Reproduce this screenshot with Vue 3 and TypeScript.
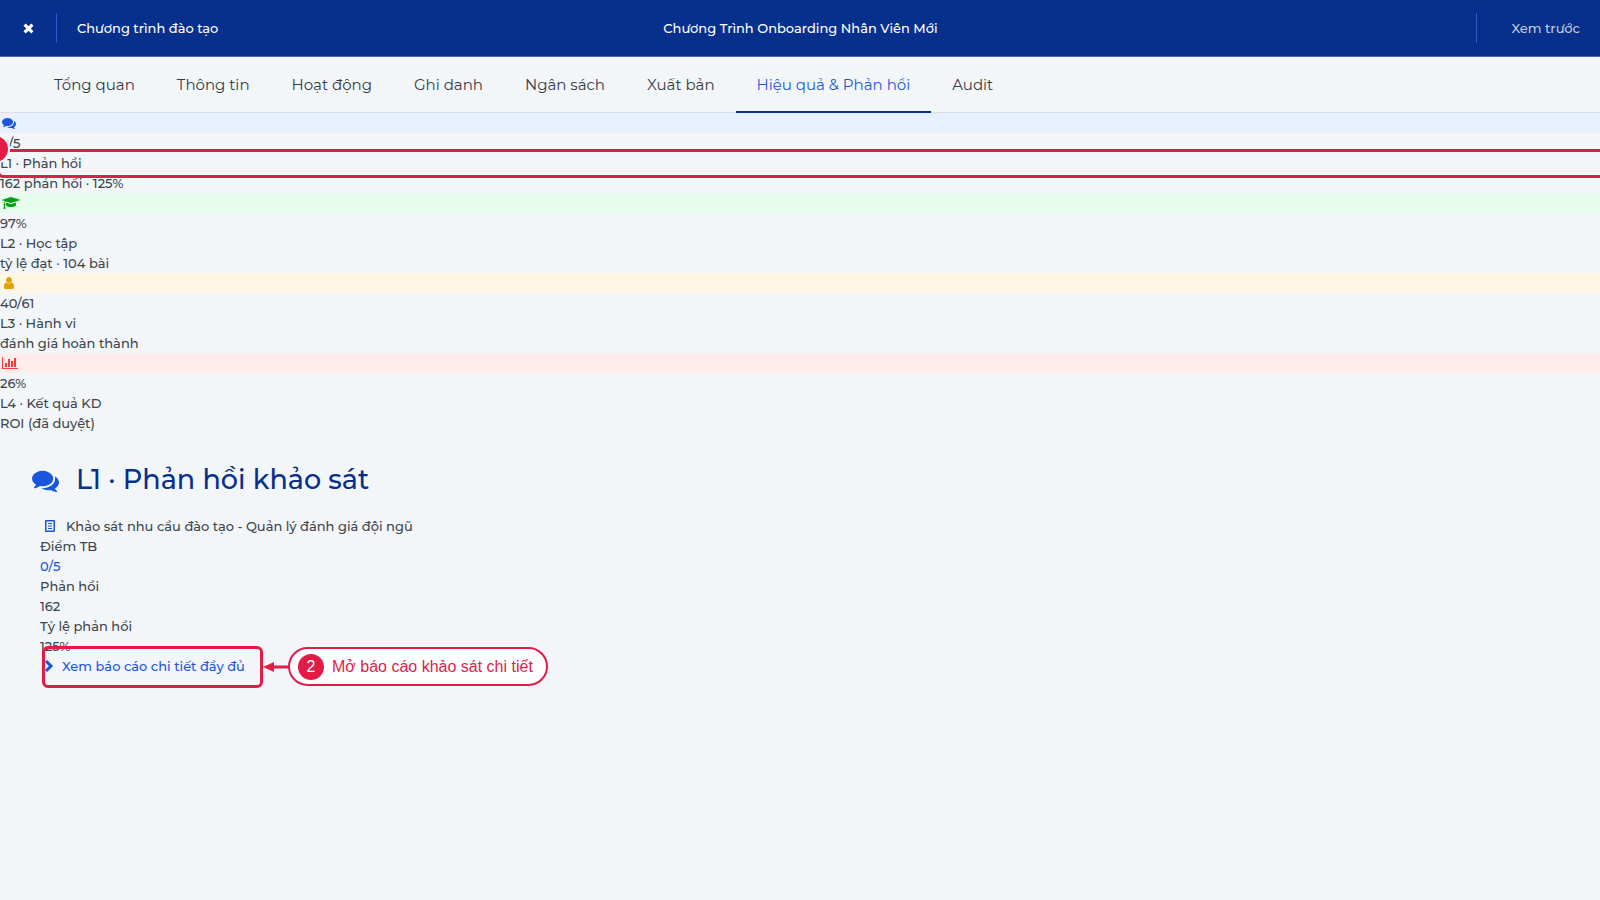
<script setup lang="ts">
interface Tab { label: string; active?: boolean }
interface Kpi { tone: string; icon: string; box: string; width: number; path: string; value: string; label: string; note: string }

const comments = 'M1408 768q0 139-94 257t-256.500 186.500t-353.500 68.500q-86 0-176-16q-124 88-278 128q-36 9-86 16h-3q-11 0-20.500-8t-11.500-21q-1-3-1-6.500t.5-6.500t2-6l2.500-5t3.500-5.500t4-5t4.500-5t4-4.500q5-6 23-25t26-29.500t22.500-29t25-38.500t20.500-44q-124-72-195-177t-71-224q0-139 94-257t256.500-186.500t353.500-68.500t353.500 68.500t256.500 186.500t94 257zM1792 1024q0 120-71 224.500t-195 176.500q10 24 20.500 44t25 38.500t22.500 29t26 29.500t23 25q1 1 4 4.500t4.500 5t4 5t3.500 5.500l2.500 5t2 6t.5 6.500t-1 6.500q-3 14-13 22t-22 7q-50-7-86-16q-154-40-278-128q-90 16-176 16q-271 0-472-132q58 4 88 4q161 0 309-45t264-129q125-92 192-212t67-254q0-77-23-152q129 71 204 178t75 230z'

const tabs: Tab[] = [
  { label: 'Tổng quan' }, { label: 'Thông tin' }, { label: 'Hoạt động' }, { label: 'Ghi danh' },
  { label: 'Ngân sách' }, { label: 'Xuất bản' }, { label: 'Hiệu quả & Phản hồi', active: true }, { label: 'Audit' },
]

const kpis: Kpi[] = [
  { tone: 'blue', icon: 'comments', box: '0 0 1792 1792', width: 14, path: comments, value: '0/5', label: 'L1 · Phản hồi', note: '162 phản hồi · 125%' },
  { tone: 'green', icon: 'graduation', box: '0 0 2304 1792', width: 18, path: 'M1774 836l18 316q4 69-82 128t-235 93.500t-323 34.500t-323-34.500t-235-93.500t-82-128l18-316l574 181q22 7 48 7t48-7zM2304 512q0 23-22 31l-1120 352q-4 1-10 1t-10-1l-652-206q-43 34-71 111.500t-34 178.500q63 36 63 109q0 69-58 107l58 433q2 14-8 25q-9 11-24 11h-192q-15 0-24-11q-10-11-8-25l58-433q-58-38-58-107q0-73 65-111q11-207 98-330l-333-104q-22-8-22-31t22-31l1120-352q4-1 10-1t10 1l1120 352q22 8 22 31z', value: '97%', label: 'L2 · Học tập', note: 'tỷ lệ đạt · 104 bài' },
  { tone: 'amber', icon: 'user', box: '0 0 1280 1792', width: 10, path: 'M1280 1399q0 109-62.500 187t-150.500 78h-854q-88 0-150.500-78t-62.500-187q0-85 8.500-160.500t31.500-152t58.500-131t94-89t134.500-34.500q131 128 313 128t313-128q76 0 134.500 34.500t94 89t58.500 131t31.500 152t8.500 160.500zM1024 512q0 159-112.500 271.500t-271.500 112.500t-271.500-112.500t-112.500-271.500t112.500-271.500t271.500-112.500t271.500 112.500t112.500 271.500z', value: '40/61', label: 'L3 · Hành vi', note: 'đánh giá hoàn thành' },
  { tone: 'red', icon: 'chart', box: '0 0 2048 1792', width: 16, path: 'M640 896v512h-256v-512h256zM1024 384v1024h-256v-1024h256zM2048 1536v128h-2048v-1536h128v1408h1920zM1408 640v768h-256v-768h256zM1792 256v1152h-256v-1152h256z', value: '26%', label: 'L4 · Kết quả KD', note: 'ROI (đã duyệt)' },
]
</script>

<template>
  <div class="app">
    <header class="topbar">
      <button class="close" type="button" aria-label="Đóng">
        <svg viewBox="0 0 12 12"><path d="M2.400 2.400L9.600 9.600M9.600 2.400L2.400 9.600" /></svg>
      </button>
      <a class="crumb" href="#">Chương trình đào tạo</a>
      <div class="title">Chương Trình Onboarding Nhân Viên Mới</div>
      <div class="actions"><button type="button" class="preview">Xem trước</button></div>
    </header>

    <nav class="tabs">
      <a v-for="tab in tabs" :key="tab.label" href="#" class="tab" :class="{ active: tab.active }">{{ tab.label }}</a>
    </nav>

    <main>
      <section class="kpis">
        <div v-for="kpi in kpis" :key="kpi.icon" class="kpi">
          <div class="band" :class="kpi.tone">
            <svg :viewBox="kpi.box" :width="kpi.width" height="14"><path :d="kpi.path" /></svg>
          </div>
          <div>{{ kpi.value }}</div>
          <div>{{ kpi.label }}</div>
          <div>{{ kpi.note }}</div>
        </div>
        <div class="mark mark-level"><span class="badge edge"></span></div>
      </section>

      <section class="survey">
        <h2>
          <svg viewBox="0 0 1792 1792" width="27" height="27"><path :d="comments" /></svg>
          <span>L1 · Phản hồi khảo sát</span>
        </h2>
        <div class="detail">
          <div class="name">
            <svg viewBox="0 0 12 14" width="12" height="14">
              <path fill-rule="evenodd" d="M2 1H10Q11 1 11 2V12Q11 13 10 13H2Q1 13 1 12V2Q1 1 2 1ZM2.500 2.500V11.500H9.500V2.500Z" />
              <path d="M4 4H8V5H4ZM4 6.500H8V7.500H4ZM4 9H8V10H4Z" />
            </svg>
            <span>Khảo sát nhu cầu đào tạo - Quản lý đánh giá đội ngũ</span>
          </div>
          <div>Điểm TB</div>
          <div class="score">0/5</div>
          <div>Phản hồi</div>
          <div>162</div>
          <div>Tỷ lệ phản hồi</div>
          <div>125%</div>
          <div class="report">
            <a href="#">
              <svg viewBox="0 0 10 14" width="10" height="14"><path d="M2 2L7 7L2 12" /></svg>
              <span>Xem báo cáo chi tiết đầy đủ</span>
            </a>
            <div class="mark mark-report"></div>
            <div class="callout">
              <svg class="arrow" viewBox="0 0 26 12" width="26" height="12"><path d="M0 6L11 1V4.500H26V7.500H11V11Z" /></svg>
              <div class="pill"><span class="badge">2</span><span>Mở báo cáo khảo sát chi tiết</span></div>
            </div>
          </div>
        </div>
      </section>
    </main>
  </div>
</template>

<style>
body { margin: 0; background: #f2f6f9; }
</style>

<style scoped>
.app {
  min-height: 100vh;
  overflow: hidden;
  background: #f2f6f9;
  color: #40454e;
  font: 500 13px/20px Montserrat, Inter, "Noto Sans", sans-serif;
}
a { color: inherit; text-decoration: none; }
button { padding: 0; border: 0; background: none; font: inherit; color: inherit; cursor: pointer; }
svg { display: block; flex: none; fill: currentColor; }

.topbar {
  display: grid;
  grid-template-columns: 57px 1fr auto 1fr;
  align-items: center;
  height: 56px;
  border-bottom: 1px solid #4a6bb8;
  background: #072f8c;
  color: #fff;
}
.close { display: flex; align-items: center; justify-content: center; height: 30px; border-right: 1px solid #2f5bcb; }
.close svg { width: 13px; height: 13px; fill: none; stroke: currentColor; stroke-width: 3; }
.crumb { margin-left: 20px; }
.title { margin-right: 28px; margin-left: -28px; }
.actions { display: flex; justify-content: flex-end; }
.preview { height: 30px; padding: 0 20px 0 34px; border-left: 1px solid #2f5bcb; color: #c3cadb; }

.tabs { display: flex; padding-left: 33px; height: 55px; border-bottom: 1px solid #d9dde6; color: #363b45; font-size: 15px; font-weight: 400; }
.tab { display: flex; align-items: center; padding: 1px 21px 0; }
.tab.active { margin-bottom: -1px; border-bottom: 2px solid #072f8c; color: #1d56dc; }

.kpis { position: relative; }
.band { display: flex; align-items: center; height: 20px; padding-left: 2px; }
.blue { background: #e8effe; color: #1a56db; }
.green { background: #e6fdee; color: #0a9f12; }
.amber { background: #fff7e3; color: #e3a008; }
.amber svg { margin-left: 2px; }
.red { background: #feebeb; color: #f8393c; }

.mark { position: absolute; box-sizing: border-box; border: 3px solid #e31b47; border-radius: 6px; }
.mark-level { top: 36px; right: -5px; left: -3px; height: 29px; }
.badge {
  display: flex;
  flex: none;
  align-items: center;
  justify-content: center;
  width: 26px;
  height: 26px;
  border-radius: 50%;
  background: #e31b47;
  color: #fff;
}
.edge { position: absolute; top: -18px; left: -20px; border: 2px solid #fff; }

.survey { padding: 31px 32px; }
h2 { display: flex; align-items: center; gap: 17px; height: 32px; margin: 0; color: #072f8c; font-size: 27px; font-weight: 500; line-height: 32px; }
h2 svg { color: #1a56db; }
.detail { padding: 20px 8px 0; }
.name { display: flex; align-items: center; gap: 10px; padding-left: 4px; }
.name svg, .score { color: #1a56db; }
.report { position: relative; display: flex; }
.report a { display: flex; align-items: center; gap: 8px; padding-left: 4px; color: #1a56db; }
.report a svg { fill: none; stroke: currentColor; stroke-width: 3; }
.mark-report { top: -10px; left: 2px; width: 221px; height: 42px; }
.callout { position: absolute; top: -9px; left: 223px; display: flex; align-items: center; }
.arrow { color: #e31b47; }
.pill {
  display: flex;
  align-items: center;
  gap: 8px;
  box-sizing: border-box;
  height: 39px;
  margin-left: -1px;
  padding: 0 13px 0 8px;
  border: 2px solid #e31b47;
  border-radius: 20px;
  background: #fff;
  color: #e31b47;
  font: 16px/20px "Liberation Sans", Arial, sans-serif;
  white-space: nowrap;
}
</style>
